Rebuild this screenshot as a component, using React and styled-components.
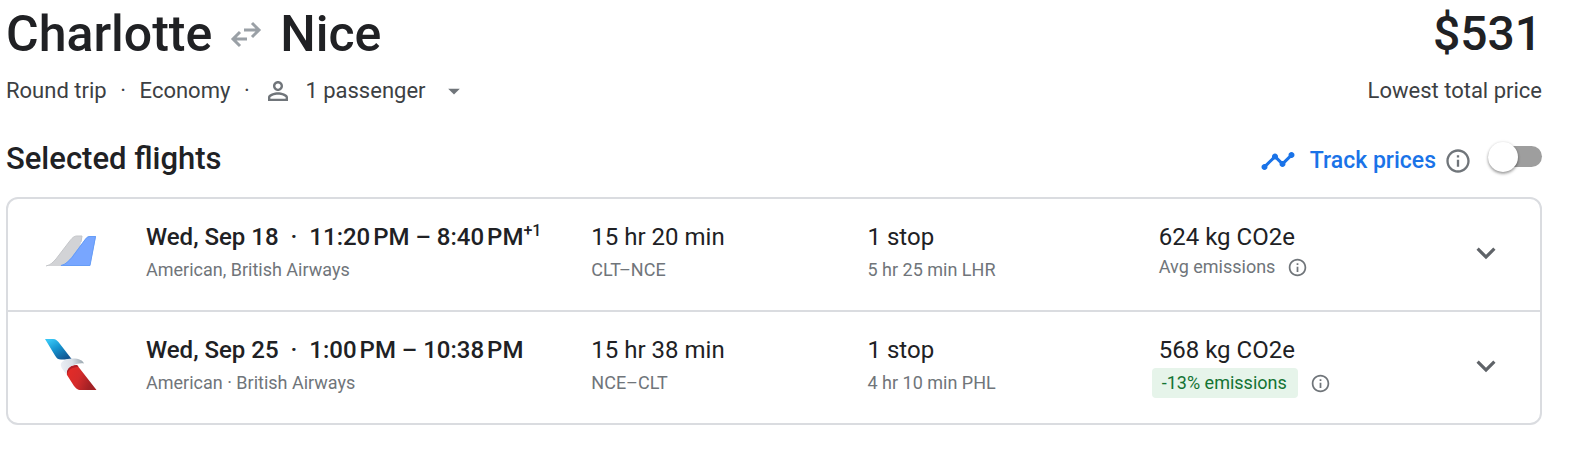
import React, { useState } from 'react';
import styled, { createGlobalStyle } from 'styled-components';

const GlobalStyle = createGlobalStyle`
  * {
    box-sizing: border-box;
  }
  body {
    margin: 0;
    background: #fff;
    color: #202124;
    font-family: Roboto, "Liberation Sans", sans-serif;
  }
  button {
    padding: 0;
    border: 0;
    background: none;
    color: inherit;
    font: inherit;
    cursor: pointer;
  }
`;

const Page = styled.main`
  padding: 4px 50px 36px 6px;
`;

const Bar = styled.div`
  display: flex;
  align-items: center;
  justify-content: space-between;
`;

const Route = styled.h1`
  display: flex;
  align-items: center;
  gap: 17px;
  margin: 0;
  font-size: 50px;
  font-weight: 500;
  line-height: 60px;
`;

const Price = styled.div`
  font-size: 48px;
  font-weight: 500;
  line-height: 60px;
`;

const Details = styled(Bar)`
  margin-top: 11px;
  color: #3c4043;
  font-size: 22px;
  line-height: 32px;
`;

const TripOptions = styled.div`
  display: flex;
  align-items: center;
`;

const Dot = styled.span`
  width: 33px;
  text-align: center;
`;

const PassengerButton = styled.button`
  display: flex;
  align-items: center;
  svg:first-child {
    margin-right: 12px;
  }
  svg:last-child {
    margin-left: 14px;
  }
`;

const SectionBar = styled(Bar)`
  margin-top: 30px;
  height: 44px;
`;

const SectionTitle = styled.h2`
  margin: 0;
  font-size: 31px;
  font-weight: 500;
  line-height: 40px;
`;

const TrackPrices = styled.div`
  display: flex;
  align-items: center;
  padding-top: 4px;
`;

const TrackLabel = styled.label`
  display: flex;
  align-items: center;
  gap: 14px;
  color: #1a73e8;
  font-size: 23px;
  font-weight: 500;
  line-height: 32px;
`;

const InfoButton = styled.button`
  display: flex;
  margin-left: ${props => props.$gap}px;
  color: #70757a;
`;

const Toggle = styled.input`
  appearance: none;
  display: flex;
  align-items: center;
  width: 54px;
  height: 21px;
  margin: 0 0 9px 16px;
  border-radius: 11px;
  background: ${props => (props.checked ? '#8ab4f8' : '#9e9e9e')};
  cursor: pointer;
  &::before {
    content: '';
    width: 30px;
    height: 30px;
    flex: none;
    margin-left: ${props => (props.checked ? '24px' : '0')};
    border-radius: 50%;
    background: #fff;
    box-shadow: 0 2px 3px rgba(0, 0, 0, 0.35), 0 0 3px rgba(0, 0, 0, 0.12);
  }
`;

const FlightList = styled.ul`
  margin: 16px 0 0;
  padding: 0;
  border: 2px solid #dadce0;
  border-radius: 12px;
  list-style: none;
`;

const Flight = styled.li`
  display: grid;
  grid-template-columns: 101px 445fr 276fr 291fr 308fr 38px;
  padding: 22px 35px 25px 37px;
  & + & {
    border-top: 2px solid #dadce0;
  }
`;

const Logo = styled.svg`
  width: 52px;
  height: 52px;
  margin-top: 4px;
`;

const Cell = styled.div`
  display: flex;
  flex-direction: column;
  gap: 2px;
  white-space: nowrap;
`;

const Primary = styled.div`
  font-size: 24px;
  font-weight: ${props => (props.$bold ? 500 : 400)};
  line-height: 32px;
  sup {
    font-size: 16px;
    line-height: 0;
  }
`;

const Separator = styled.span`
  margin: 0 6px;
`;

const Secondary = styled.div`
  color: #70757a;
  font-size: 18px;
  line-height: 30px;
`;

const Emissions = styled.div`
  display: flex;
  align-items: center;
  align-self: flex-start;
  color: #70757a;
  font-size: 18px;
  line-height: 24px;
`;

const Badge = styled.span`
  margin-left: -7px;
  padding: 3px 11px 3px 10px;
  border-radius: 4px;
  background: #e6f4ea;
  color: #137333;
`;

const ExpandButton = styled.button`
  display: flex;
  align-self: start;
  margin-top: 13px;
  color: #5f6368;
`;

const Icon = ({ size, path, color }) => (
  <svg width={size} height={size} viewBox="0 0 24 24" fill={color || 'currentColor'} aria-hidden="true">
    <path d={path} />
  </svg>
);

const PERSON = 'M12 5.9c1.16 0 2.1.94 2.1 2.1s-.94 2.1-2.1 2.1S9.9 9.16 9.9 8s.94-2.1 2.1-2.1m0 9c2.97 0 6.1 1.46 6.1 2.1v1.1H5.9V17c0-.64 3.13-2.1 6.1-2.1M12 4C9.79 4 8 5.79 8 8s1.79 4 4 4 4-1.79 4-4-1.79-4-4-4zm0 9c-2.67 0-8 1.34-8 4v3h16v-3c0-2.66-5.33-4-8-4z';
const DROP_DOWN = 'M7 10l5 5 5-5z';
const TIMELINE = 'M23 8c0 1.1-.9 2-2 2-.18 0-.35-.02-.51-.07l-3.56 3.55c.05.16.07.34.07.52 0 1.1-.9 2-2 2s-2-.9-2-2c0-.18.02-.36.07-.52l-2.55-2.55c-.16.05-.34.07-.52.07s-.36-.02-.52-.07l-4.55 4.56c.05.16.07.33.07.51 0 1.1-.9 2-2 2s-2-.9-2-2 .9-2 2-2c.18 0 .35.02.51.07l4.56-4.55C8.02 9.36 8 9.18 8 9c0-1.1.9-2 2-2s2 .9 2 2c0 .18-.02.36-.07.52l2.55 2.55c.16-.05.34-.07.52-.07s.36.02.52.07l3.55-3.56C19.02 8.35 19 8.18 19 8c0-1.1.9-2 2-2s2 .9 2 2z';
const INFO = 'M11 7h2v2h-2zm0 4h2v6h-2zm1-9C6.48 2 2 6.48 2 12s4.48 10 10 10 10-4.48 10-10S17.52 2 12 2zm0 18c-4.41 0-8-3.59-8-8s3.59-8 8-8 8 3.59 8 8-3.59 8-8 8z';
const EXPAND = 'M16.59 8.59L12 13.17 7.41 8.59 6 10l6 6 6-6z';

const RoundTripArrows = () => (
  <svg width="34" height="30" viewBox="0 0 34 30" fill="none" stroke="#9aa0a6" strokeWidth="3" aria-label="to and from">
    <path d="M15 11h15M23 4l7 7-7 7" />
    <path d="M18 20H4M11 13l-7 7 7 7" />
  </svg>
);

const MultipleAirlinesLogo = () => (
  <Logo viewBox="0 0 52 52" role="img" aria-label="Multiple airlines">
    <path d="M1 41c5-1 7-4 10-7l13-17c3-4 5-6 8-6h5l-5 30z" fill="#d2d3d6" />
    <path d="M1 41c5-1 7-4 10-7l13-17c3-4 5-6 8-6h5l-1 6" fill="none" stroke="#c4c6c9" strokeWidth="1" />
    <path d="M15 41c5-1 8-5 11-8l12-16c3-4 4-6 7-6h6l-6 30z" fill="#78a6ff" />
    <path d="M16 40.500c5-1 8-5 11-8l11-15c3-4 4-6 7-6h5.500l-5.500 29z" fill="none" stroke="#669df6" strokeWidth="1" />
  </Logo>
);

const AmericanLogo = () => (
  <Logo viewBox="0 0 52 52" role="img" aria-label="American">
    <defs>
      <linearGradient id="tail-blue" x1="8" y1="0" x2="20" y2="21" gradientUnits="userSpaceOnUse">
        <stop offset="0" stopColor="#36c5f4" />
        <stop offset="0.45" stopColor="#1593cf" />
        <stop offset="1" stopColor="#125591" />
      </linearGradient>
      <linearGradient id="tail-red" x1="22" y1="34" x2="46" y2="44" gradientUnits="userSpaceOnUse">
        <stop offset="0" stopColor="#e32b27" />
        <stop offset="0.5" stopColor="#d52b2b" />
        <stop offset="1" stopColor="#a32125" />
      </linearGradient>
      <linearGradient id="tail-beak" x1="17" y1="28" x2="38" y2="24" gradientUnits="userSpaceOnUse">
        <stop offset="0" stopColor="#e9edf3" />
        <stop offset="0.5" stopColor="#d9dfe6" />
        <stop offset="1" stopColor="#9daab2" />
      </linearGradient>
    </defs>
    <path d="M0 1h8c3 0 5 2 7 5l12 15.500H16c-3 0-4-1-6-4z" fill="url(#tail-blue)" />
    <path d="M22 37c-1-6 3-9 10-10l19.500 25H36c-4 0-5-2-7-4z" fill="url(#tail-red)" />
    <path d="M22 37c-1-7 3-10 10-10l1.500 2c-6 0-10 2-11.500 8z" fill="#b01f27" />
    <path d="M22 37c-5-6-8-10-5-13 2-2.500 6-3.500 11-3.500 6 0 10 2 11 5-3-.5-7 0-11 2-4 1.500-7 4-6 9.500z" fill="url(#tail-beak)" />
  </Logo>
);

const flights = [
  {
    logo: <MultipleAirlinesLogo />,
    date: 'Wed, Sep 18',
    times: '11:20\u202fPM – 8:40\u202fPM',
    nextDay: '+1',
    airlines: 'American, British Airways',
    duration: '15 hr 20 min',
    airports: 'CLT–NCE',
    layover: '5 hr 25 min LHR',
    co2: '624 kg CO2e',
    emissions: 'Avg emissions',
  },
  {
    logo: <AmericanLogo />,
    date: 'Wed, Sep 25',
    times: '1:00\u202fPM – 10:38\u202fPM',
    airlines: 'American · British Airways',
    duration: '15 hr 38 min',
    airports: 'NCE–CLT',
    layover: '4 hr 10 min PHL',
    co2: '568 kg CO2e',
    emissions: '-13% emissions',
    lower: true,
  },
];

const FlightRow = ({ flight }) => (
  <Flight>
    {flight.logo}
    <Cell>
      <Primary $bold>
        {flight.date}
        <Separator> · </Separator>
        {flight.times}
        {flight.nextDay && <sup>{flight.nextDay}</sup>}
      </Primary>
      <Secondary>{flight.airlines}</Secondary>
    </Cell>
    <Cell>
      <Primary>{flight.duration}</Primary>
      <Secondary>{flight.airports}</Secondary>
    </Cell>
    <Cell>
      <Primary>1 stop</Primary>
      <Secondary>{flight.layover}</Secondary>
    </Cell>
    <Cell>
      <Primary>{flight.co2}</Primary>
      <Emissions>
        {flight.lower ? <Badge>{flight.emissions}</Badge> : flight.emissions}
        <InfoButton $gap={12} aria-label="About emissions">
          <Icon size={21} path={INFO} />
        </InfoButton>
      </Emissions>
    </Cell>
    <ExpandButton aria-label="Flight details">
      <Icon size={38} path={EXPAND} />
    </ExpandButton>
  </Flight>
);

export default function App() {
  const [tracking, setTracking] = useState(false);

  return (
    <Page>
      <GlobalStyle />
      <Bar>
        <Route>
          <span>Charlotte</span>
          <RoundTripArrows />
          <span>Nice</span>
        </Route>
        <Price>$531</Price>
      </Bar>
      <Details>
        <TripOptions>
          <span>Round trip</span>
          <Dot>·</Dot>
          <span>Economy</span>
          <Dot>·</Dot>
          <PassengerButton>
            <Icon size={30} path={PERSON} color="#70757a" />
            1 passenger
            <Icon size={28} path={DROP_DOWN} color="#70757a" />
          </PassengerButton>
        </TripOptions>
        <span>Lowest total price</span>
      </Details>
      <SectionBar>
        <SectionTitle>Selected flights</SectionTitle>
        <TrackPrices>
          <TrackLabel htmlFor="track-prices">
            <Icon size={36} path={TIMELINE} />
            Track prices
          </TrackLabel>
          <InfoButton $gap={8} aria-label="About price tracking">
            <Icon size={28} path={INFO} />
          </InfoButton>
          <Toggle
            id="track-prices"
            type="checkbox"
            role="switch"
            checked={tracking}
            onChange={e => setTracking(e.target.checked)}
          />
        </TrackPrices>
      </SectionBar>
      <FlightList>
        {flights.map(flight => <FlightRow key={flight.date} flight={flight} />)}
      </FlightList>
    </Page>
  );
}
